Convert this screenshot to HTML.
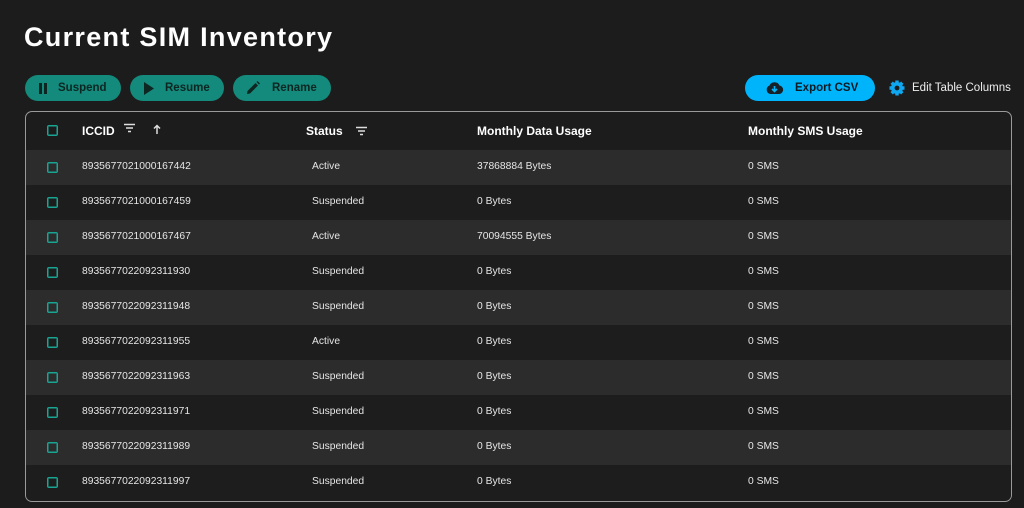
<!DOCTYPE html>
<html><head><meta charset="utf-8"><style>
*{box-sizing:border-box;margin:0;padding:0}
body{width:1024px;height:508px;background:#1c1c1c;font-family:"Liberation Sans",sans-serif;color:#fff;position:relative;overflow:hidden}
h1{position:absolute;left:24px;top:22px;font-size:27px;font-weight:bold;letter-spacing:1.3px}
.btn{position:absolute;top:75px;height:26px;border-radius:13px;background:#138a7c;color:#0d2622;font-size:11.5px;font-weight:bold;display:flex;align-items:center}
.btn svg{position:absolute}
.tbl{position:absolute;left:25px;top:111px;width:987px;height:391px;border:1px solid #9a9a9a;border-radius:7px;overflow:hidden}
.hdr{height:38px;position:relative;font-size:12px;font-weight:bold}
.row{height:35px;position:relative;font-size:10.3px;color:#e6e6e6}
.row:nth-child(odd){background:#2c2c2c}
.row:nth-child(even){background:#1d1d1d}
.cb{position:absolute;left:21px;width:11px;height:11px;border:1px solid #19a593;border-radius:2px;box-shadow:inset 0 0 0 0.5px #19a593}
.c{position:absolute}
</style></head><body>
<h1>Current SIM Inventory</h1>
<div class="btn" style="left:25px;width:96px"><svg style="left:13px" width="10" height="12"><rect x="1" y="1" width="3" height="11" fill="#0d2622"/><rect x="6" y="1" width="3" height="11" fill="#0d2622"/></svg><span style="margin-left:33px">Suspend</span></div>
<div class="btn" style="left:130px;width:94px"><svg style="left:13px" width="12" height="13"><path d="M1 0 L11 6.5 L1 13Z" fill="#0d2622"/></svg><span style="margin-left:35px">Resume</span></div>
<div class="btn" style="left:233px;width:98px"><svg style="left:13px" width="14" height="14"><path d="M1 13 L1.5 10 L9.5 2 L12 4.5 L4 12.5Z M10.5 1 L11.5 0 L14 2.5 L13 3.5Z" fill="#0d2622"/></svg><span style="margin-left:39px">Rename</span></div>
<div class="btn" style="left:745px;width:130px;background:#00b4fb;color:#0b1a22"><svg style="left:20px" width="19" height="14"><path d="M5 13 A4.5 4.5 0 0 1 4.5 4.5 A5.5 5.5 0 0 1 14.5 4.5 A4.3 4.3 0 0 1 14.5 13Z" fill="#152028"/><path d="M9.5 5 V10 M7 8 L9.5 10.5 L12 8" stroke="#00b4fb" stroke-width="1.6" fill="none"/></svg><span style="margin-left:50px">Export CSV</span></div>
<svg style="position:absolute;left:888px;top:79px" width="18" height="18" viewBox="0 0 18 18"><g fill="#0fa8f0"><circle cx="9" cy="9" r="6"/><g stroke="#0fa8f0" stroke-width="3.4"><path d="M9 1.5V16.5M1.5 9H16.5M3.7 3.7L14.3 14.3M14.3 3.7L3.7 14.3"/></g></g><circle cx="9" cy="9" r="2.4" fill="#1c1c1c"/></svg>
<div style="position:absolute;left:912px;top:82px;font-size:11.5px;color:#eee">Edit Table Columns</div>
<div class="tbl">
<div class="hdr">
<div class="cb" style="top:13px"></div>
<div class="c" style="left:56px;top:12px">ICCID</div>
<svg class="c" style="left:98px;top:11px" width="11" height="10"><path d="M0 1.5H11M2 5H9M4 8.5H7" stroke="#ddd" stroke-width="1.5"/></svg>
<svg class="c" style="left:127px;top:12px" width="8" height="10"><path d="M4 10V2M1 4.5L4 1.5L7 4.5" stroke="#ddd" stroke-width="1.5" fill="none"/></svg>
<div class="c" style="left:280px;top:12px">Status</div>
<svg class="c" style="left:330px;top:14px" width="11" height="10"><path d="M0 1.5H11M2 5H9M4 8.5H7" stroke="#ddd" stroke-width="1.5"/></svg>
<div class="c" style="left:451px;top:12px">Monthly Data Usage</div>
<div class="c" style="left:722px;top:12px">Monthly SMS Usage</div>
</div>
<div>
<div class="row"><div class="cb" style="top:12px"></div><div class="c" style="left:56px;top:11px">8935677021000167442</div><div class="c" style="left:286px;top:11px">Active</div><div class="c" style="left:451px;top:11px">37868884 Bytes</div><div class="c" style="left:722px;top:11px">0 SMS</div></div>
<div class="row"><div class="cb" style="top:12px"></div><div class="c" style="left:56px;top:11px">8935677021000167459</div><div class="c" style="left:286px;top:11px">Suspended</div><div class="c" style="left:451px;top:11px">0 Bytes</div><div class="c" style="left:722px;top:11px">0 SMS</div></div>
<div class="row"><div class="cb" style="top:12px"></div><div class="c" style="left:56px;top:11px">8935677021000167467</div><div class="c" style="left:286px;top:11px">Active</div><div class="c" style="left:451px;top:11px">70094555 Bytes</div><div class="c" style="left:722px;top:11px">0 SMS</div></div>
<div class="row"><div class="cb" style="top:12px"></div><div class="c" style="left:56px;top:11px">8935677022092311930</div><div class="c" style="left:286px;top:11px">Suspended</div><div class="c" style="left:451px;top:11px">0 Bytes</div><div class="c" style="left:722px;top:11px">0 SMS</div></div>
<div class="row"><div class="cb" style="top:12px"></div><div class="c" style="left:56px;top:11px">8935677022092311948</div><div class="c" style="left:286px;top:11px">Suspended</div><div class="c" style="left:451px;top:11px">0 Bytes</div><div class="c" style="left:722px;top:11px">0 SMS</div></div>
<div class="row"><div class="cb" style="top:12px"></div><div class="c" style="left:56px;top:11px">8935677022092311955</div><div class="c" style="left:286px;top:11px">Active</div><div class="c" style="left:451px;top:11px">0 Bytes</div><div class="c" style="left:722px;top:11px">0 SMS</div></div>
<div class="row"><div class="cb" style="top:12px"></div><div class="c" style="left:56px;top:11px">8935677022092311963</div><div class="c" style="left:286px;top:11px">Suspended</div><div class="c" style="left:451px;top:11px">0 Bytes</div><div class="c" style="left:722px;top:11px">0 SMS</div></div>
<div class="row"><div class="cb" style="top:12px"></div><div class="c" style="left:56px;top:11px">8935677022092311971</div><div class="c" style="left:286px;top:11px">Suspended</div><div class="c" style="left:451px;top:11px">0 Bytes</div><div class="c" style="left:722px;top:11px">0 SMS</div></div>
<div class="row"><div class="cb" style="top:12px"></div><div class="c" style="left:56px;top:11px">8935677022092311989</div><div class="c" style="left:286px;top:11px">Suspended</div><div class="c" style="left:451px;top:11px">0 Bytes</div><div class="c" style="left:722px;top:11px">0 SMS</div></div>
<div class="row"><div class="cb" style="top:12px"></div><div class="c" style="left:56px;top:11px">8935677022092311997</div><div class="c" style="left:286px;top:11px">Suspended</div><div class="c" style="left:451px;top:11px">0 Bytes</div><div class="c" style="left:722px;top:11px">0 SMS</div></div>
</div>
</div>
</body></html>
